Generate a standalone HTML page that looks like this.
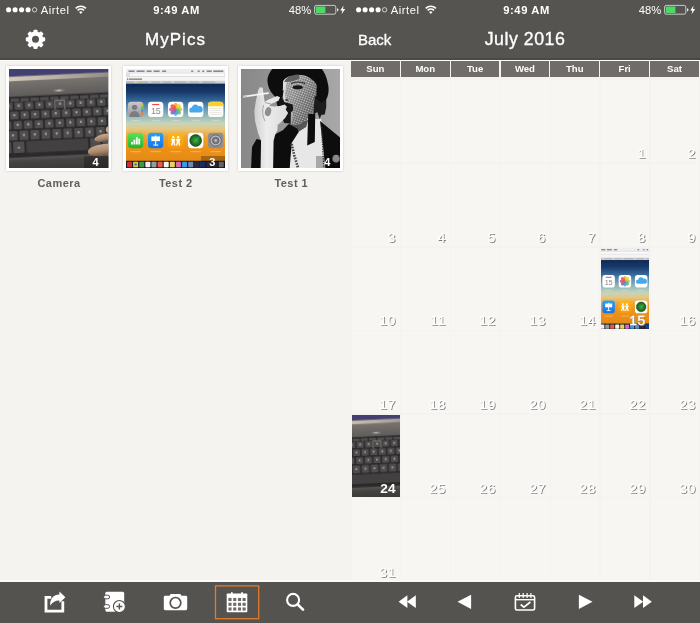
<!DOCTYPE html>
<html><head><meta charset="utf-8">
<style>
html,body{margin:0;padding:0;}
body{width:700px;height:623px;overflow:hidden;background:#f4f3ef;font-family:"Liberation Sans",sans-serif;position:relative;}
.scr{will-change:transform;position:absolute;top:0;width:350px;height:623px;overflow:hidden;background:#f4f3ef;}
#L{left:0;}#R{left:350px;background:#f4f3ef;}
.hdr{position:absolute;left:0;top:0;width:350px;height:59.7px;background:linear-gradient(#565451,#565451 57.4px,#4b4946 58.4px,#4b4946);}
.hl{position:absolute;left:0;top:59.7px;width:350px;height:1.7px;background:#fdfdfc;}
.sb{position:absolute;top:3px;height:14px;line-height:14px;color:#fff;font-size:11.2px;white-space:nowrap;}
.title{position:absolute;top:26.5px;left:0;width:350px;text-align:center;color:#fff;font-size:16.5px;line-height:26px;-webkit-text-stroke:0.35px #fff;}
.tb{position:absolute;left:0;top:582.1px;width:350px;height:41px;background:#55534f;box-shadow:0 -1.6px 0 #fcfcfa;}
.abs{position:absolute;}
.frame{position:absolute;top:66.2px;width:104.8px;height:104.8px;background:#fff;box-shadow:0 .3px 1.8px rgba(60,55,40,.28);}
.ph{position:absolute;left:2.9px;top:2.9px;width:99.3px;height:99.1px;overflow:hidden;}
.lbl{position:absolute;top:176px;width:117px;text-align:center;font-weight:bold;font-size:11px;letter-spacing:.45px;color:#62605d;line-height:14px;}
.badge{position:absolute;right:0;bottom:0;width:22.8px;padding-right:1.6px;height:11.8px;background:rgba(0,0,0,.27);color:#fff;font-weight:bold;font-size:11px;line-height:12.4px;text-align:center;}
.wd{position:absolute;top:61.4px;width:48.8px;height:15.7px;background:#6f6c69;color:#fff;font-weight:bold;font-size:9.6px;line-height:15.2px;text-align:center;}
.cell{position:absolute;width:48.5px;height:82px;background:#f7f6f3;}
.dn{position:absolute;transform:scaleX(1.1);transform-origin:100% 50%;color:#fff;font-size:12.7px;line-height:14px;text-align:right;width:48.6px;letter-spacing:.4px;-webkit-text-stroke:.35px #fff;text-shadow:1px 1px .5px #7a7875;}
</style></head><body>
<svg width="0" height="0" style="position:absolute;left:-10px;top:-10px"><defs>
<symbol id="ph1" viewBox="0 0 99 99" preserveAspectRatio="none">
<defs><linearGradient id="k1a" x1="0" x2="1" y1="0" y2="0"><stop offset="0" stop-color="#d6cbbb"/><stop offset=".5" stop-color="#b9b0a4"/><stop offset="1" stop-color="#8f8a84"/></linearGradient><linearGradient id="k1b" x1="0" x2="0" y1="0" y2="1"><stop offset="0" stop-color="#77736f"/><stop offset="1" stop-color="#5d5a58"/></linearGradient><linearGradient id="k1c" x1="0" x2="0" y1="0" y2="1"><stop offset="0" stop-color="#5a5755"/><stop offset=".22" stop-color="#454341"/><stop offset="1" stop-color="#353332"/></linearGradient><radialGradient id="k1h"><stop offset="0" stop-color="#d8d4cf" stop-opacity=".95"/><stop offset="1" stop-color="#8a8682" stop-opacity="0"/></radialGradient><linearGradient id="k1f" x1="0" x2="0" y1="0" y2="1"><stop offset="0" stop-color="#c9ab90"/><stop offset=".55" stop-color="#ab8a6c"/><stop offset="1" stop-color="#6c5244"/></linearGradient><filter id="bl1" x="-5%" y="-5%" width="110%" height="110%"><feGaussianBlur stdDeviation=".45"/></filter></defs>
<rect width="99" height="99" fill="#2d2c2c"/>
<g transform="rotate(-2.7 49.5 49.5)" filter="url(#bl1)">
<rect x="-5" y="-6" width="110" height="12" fill="#433f70"/>
<rect x="-5" y="5.6" width="110" height="5" fill="url(#k1a)"/>
<rect x="-5" y="10.2" width="110" height="16.3" fill="url(#k1b)"/>
<ellipse cx="51" cy="21.5" rx="7" ry="2" fill="url(#k1h)"/>
<rect x="-5" y="25.6" width="110" height="62" fill="#2c2b2c"/>
<rect x="-5" y="86.6" width="110" height="20" fill="url(#k1c)"/>
<rect x="2.5" y="27.4" width="8.4" height="3.3" rx=".6" fill="#4f4d4e"/>
<rect x="12.4" y="27.4" width="8.4" height="3.3" rx=".6" fill="#4f4d4e"/>
<rect x="22.3" y="27.4" width="8.4" height="3.3" rx=".6" fill="#4f4d4e"/>
<rect x="32.2" y="27.4" width="8.4" height="3.3" rx=".6" fill="#4f4d4e"/>
<rect x="42.1" y="27.4" width="8.4" height="3.3" rx=".6" fill="#4f4d4e"/>
<rect x="52.0" y="27.4" width="8.4" height="3.3" rx=".6" fill="#4f4d4e"/>
<rect x="61.9" y="27.4" width="8.4" height="3.3" rx=".6" fill="#4f4d4e"/>
<rect x="71.8" y="27.4" width="8.4" height="3.3" rx=".6" fill="#4f4d4e"/>
<rect x="81.7" y="27.4" width="8.4" height="3.3" rx=".6" fill="#4f4d4e"/>
<rect x="91.6" y="27.4" width="8.4" height="3.3" rx=".6" fill="#4f4d4e"/>
<rect x="101.5" y="27.4" width="8.4" height="3.3" rx=".6" fill="#4f4d4e"/>
<rect x="-4.0" y="31.4" width="8.2" height="7.3" rx=".9" fill="#4f4d4e"/>
<rect x="-0.8" y="33.6" width="1.7" height="2.2" fill="#c4c2bf" opacity=".8"/>
<rect x="6.3" y="31.4" width="8.2" height="7.3" rx=".9" fill="#4f4d4e"/>
<rect x="9.5" y="33.6" width="1.7" height="2.2" fill="#c4c2bf" opacity=".8"/>
<rect x="16.6" y="31.4" width="8.2" height="7.3" rx=".9" fill="#4f4d4e"/>
<rect x="19.8" y="33.6" width="1.7" height="2.2" fill="#c4c2bf" opacity=".8"/>
<rect x="26.9" y="31.4" width="8.2" height="7.3" rx=".9" fill="#4f4d4e"/>
<rect x="30.1" y="33.6" width="1.7" height="2.2" fill="#c4c2bf" opacity=".8"/>
<rect x="37.2" y="31.4" width="8.2" height="7.3" rx=".9" fill="#4f4d4e"/>
<rect x="40.4" y="33.6" width="1.7" height="2.2" fill="#c4c2bf" opacity=".8"/>
<rect x="47.5" y="31.4" width="8.2" height="7.3" rx=".9" fill="#4f4d4e"/>
<rect x="50.7" y="33.6" width="1.7" height="2.2" fill="#c4c2bf" opacity=".8"/>
<rect x="57.8" y="31.4" width="8.2" height="7.3" rx=".9" fill="#4f4d4e"/>
<rect x="61.0" y="33.6" width="1.7" height="2.2" fill="#c4c2bf" opacity=".8"/>
<rect x="68.1" y="31.4" width="8.2" height="7.3" rx=".9" fill="#4f4d4e"/>
<rect x="71.3" y="33.6" width="1.7" height="2.2" fill="#c4c2bf" opacity=".8"/>
<rect x="78.4" y="31.4" width="8.2" height="7.3" rx=".9" fill="#4f4d4e"/>
<rect x="81.6" y="33.6" width="1.7" height="2.2" fill="#c4c2bf" opacity=".8"/>
<rect x="88.7" y="31.4" width="8.2" height="7.3" rx=".9" fill="#4f4d4e"/>
<rect x="91.9" y="33.6" width="1.7" height="2.2" fill="#c4c2bf" opacity=".8"/>
<rect x="99.0" y="31.4" width="8.2" height="7.3" rx=".9" fill="#4f4d4e"/>
<rect x="102.2" y="33.6" width="1.7" height="2.2" fill="#c4c2bf" opacity=".8"/>
<rect x="-9.0" y="40.5" width="8.3" height="7.8" rx=".9" fill="#4f4d4e"/>
<rect x="-5.8" y="43.0" width="1.7" height="2.2" fill="#c4c2bf" opacity=".8"/>
<rect x="1.3" y="40.5" width="8.3" height="7.8" rx=".9" fill="#4f4d4e"/>
<rect x="4.6" y="43.0" width="1.7" height="2.2" fill="#c4c2bf" opacity=".8"/>
<rect x="11.7" y="40.5" width="8.3" height="7.8" rx=".9" fill="#4f4d4e"/>
<rect x="14.9" y="43.0" width="1.7" height="2.2" fill="#c4c2bf" opacity=".8"/>
<rect x="22.0" y="40.5" width="8.3" height="7.8" rx=".9" fill="#4f4d4e"/>
<rect x="25.3" y="43.0" width="1.7" height="2.2" fill="#c4c2bf" opacity=".8"/>
<rect x="32.4" y="40.5" width="8.3" height="7.8" rx=".9" fill="#4f4d4e"/>
<rect x="35.6" y="43.0" width="1.7" height="2.2" fill="#c4c2bf" opacity=".8"/>
<rect x="42.8" y="40.5" width="8.3" height="7.8" rx=".9" fill="#4f4d4e"/>
<rect x="46.0" y="43.0" width="1.7" height="2.2" fill="#c4c2bf" opacity=".8"/>
<rect x="53.1" y="40.5" width="8.3" height="7.8" rx=".9" fill="#4f4d4e"/>
<rect x="56.4" y="43.0" width="1.7" height="2.2" fill="#c4c2bf" opacity=".8"/>
<rect x="63.5" y="40.5" width="8.3" height="7.8" rx=".9" fill="#4f4d4e"/>
<rect x="66.7" y="43.0" width="1.7" height="2.2" fill="#c4c2bf" opacity=".8"/>
<rect x="73.8" y="40.5" width="8.3" height="7.8" rx=".9" fill="#4f4d4e"/>
<rect x="77.0" y="43.0" width="1.7" height="2.2" fill="#c4c2bf" opacity=".8"/>
<rect x="84.1" y="40.5" width="8.3" height="7.8" rx=".9" fill="#4f4d4e"/>
<rect x="87.4" y="43.0" width="1.7" height="2.2" fill="#c4c2bf" opacity=".8"/>
<rect x="94.5" y="40.5" width="8.3" height="7.8" rx=".9" fill="#4f4d4e"/>
<rect x="97.7" y="43.0" width="1.7" height="2.2" fill="#c4c2bf" opacity=".8"/>
<rect x="-6.2" y="50.1" width="8.4" height="8.0" rx=".9" fill="#4f4d4e"/>
<rect x="-2.9" y="52.7" width="1.7" height="2.2" fill="#c4c2bf" opacity=".8"/>
<rect x="4.3" y="50.1" width="8.4" height="8.0" rx=".9" fill="#4f4d4e"/>
<rect x="7.6" y="52.7" width="1.7" height="2.2" fill="#c4c2bf" opacity=".8"/>
<rect x="14.8" y="50.1" width="8.4" height="8.0" rx=".9" fill="#4f4d4e"/>
<rect x="18.1" y="52.7" width="1.7" height="2.2" fill="#c4c2bf" opacity=".8"/>
<rect x="25.3" y="50.1" width="8.4" height="8.0" rx=".9" fill="#4f4d4e"/>
<rect x="28.6" y="52.7" width="1.7" height="2.2" fill="#c4c2bf" opacity=".8"/>
<rect x="35.8" y="50.1" width="8.4" height="8.0" rx=".9" fill="#4f4d4e"/>
<rect x="39.1" y="52.7" width="1.7" height="2.2" fill="#c4c2bf" opacity=".8"/>
<rect x="46.3" y="50.1" width="8.4" height="8.0" rx=".9" fill="#4f4d4e"/>
<rect x="49.6" y="52.7" width="1.7" height="2.2" fill="#c4c2bf" opacity=".8"/>
<rect x="56.8" y="50.1" width="8.4" height="8.0" rx=".9" fill="#4f4d4e"/>
<rect x="60.1" y="52.7" width="1.7" height="2.2" fill="#c4c2bf" opacity=".8"/>
<rect x="67.3" y="50.1" width="8.4" height="8.0" rx=".9" fill="#4f4d4e"/>
<rect x="70.6" y="52.7" width="1.7" height="2.2" fill="#c4c2bf" opacity=".8"/>
<rect x="77.8" y="50.1" width="8.4" height="8.0" rx=".9" fill="#4f4d4e"/>
<rect x="81.1" y="52.7" width="1.7" height="2.2" fill="#c4c2bf" opacity=".8"/>
<rect x="88.3" y="50.1" width="8.4" height="8.0" rx=".9" fill="#4f4d4e"/>
<rect x="91.6" y="52.7" width="1.7" height="2.2" fill="#c4c2bf" opacity=".8"/>
<rect x="98.8" y="50.1" width="8.4" height="8.0" rx=".9" fill="#4f4d4e"/>
<rect x="102.1" y="52.7" width="1.7" height="2.2" fill="#c4c2bf" opacity=".8"/>
<rect x="-1.0" y="59.9" width="8.7" height="9.3" rx=".9" fill="#4f4d4e"/>
<rect x="2.4" y="63.1" width="1.7" height="2.2" fill="#c4c2bf" opacity=".8"/>
<rect x="9.9" y="59.9" width="8.7" height="9.3" rx=".9" fill="#4f4d4e"/>
<rect x="13.3" y="63.1" width="1.7" height="2.2" fill="#c4c2bf" opacity=".8"/>
<rect x="20.8" y="59.9" width="8.7" height="9.3" rx=".9" fill="#4f4d4e"/>
<rect x="24.2" y="63.1" width="1.7" height="2.2" fill="#c4c2bf" opacity=".8"/>
<rect x="31.7" y="59.9" width="8.7" height="9.3" rx=".9" fill="#4f4d4e"/>
<rect x="35.2" y="63.1" width="1.7" height="2.2" fill="#c4c2bf" opacity=".8"/>
<rect x="42.6" y="59.9" width="8.7" height="9.3" rx=".9" fill="#4f4d4e"/>
<rect x="46.1" y="63.1" width="1.7" height="2.2" fill="#c4c2bf" opacity=".8"/>
<rect x="53.5" y="59.9" width="8.7" height="9.3" rx=".9" fill="#4f4d4e"/>
<rect x="57.0" y="63.1" width="1.7" height="2.2" fill="#c4c2bf" opacity=".8"/>
<rect x="64.4" y="59.9" width="8.7" height="9.3" rx=".9" fill="#4f4d4e"/>
<rect x="67.8" y="63.1" width="1.7" height="2.2" fill="#c4c2bf" opacity=".8"/>
<rect x="75.3" y="59.9" width="8.7" height="9.3" rx=".9" fill="#4f4d4e"/>
<rect x="78.8" y="63.1" width="1.7" height="2.2" fill="#c4c2bf" opacity=".8"/>
<rect x="86.2" y="59.9" width="8.7" height="9.3" rx=".9" fill="#4f4d4e"/>
<rect x="89.7" y="63.1" width="1.7" height="2.2" fill="#c4c2bf" opacity=".8"/>
<rect x="97.1" y="59.9" width="8.7" height="9.3" rx=".9" fill="#4f4d4e"/>
<rect x="100.6" y="63.1" width="1.7" height="2.2" fill="#c4c2bf" opacity=".8"/>
<rect x="-4" y="70.8" width="5" height="11" rx=".9" fill="#4f4d4e"/>
<rect x="3" y="70.8" width="11" height="11" rx=".9" fill="#4f4d4e"/>
<rect x="7.6" y="75.8" width="1.9" height="1.7" fill="#c4c2bf" opacity=".8"/>
<rect x="16.2" y="70.8" width="61.5" height="11.3" rx=".9" fill="#424040"/>
<rect x="80" y="70.8" width="10" height="11" rx=".9" fill="#4f4d4e"/>
<rect x="92" y="70.8" width="10" height="11" rx=".9" fill="#4f4d4e"/>
<path d="M46.6 40.3 V31.2 H56.2 V40.3" fill="none" stroke="#cfcac2" stroke-width=".7" opacity=".8"/>
</g>
<g filter="url(#bl1)">
<ellipse cx="100.5" cy="60.6" rx="4" ry="3.3" fill="#c6a88c"/>
<ellipse cx="96.5" cy="68.6" rx="11.5" ry="4" fill="url(#k1f)" transform="rotate(-10 96.5 68.6)"/>
<ellipse cx="93.5" cy="81" rx="15" ry="6" fill="url(#k1f)" transform="rotate(-8 93.5 81)"/>
</g>
</symbol>
<symbol id="ph2" viewBox="0 0 99 99" preserveAspectRatio="none">
<defs><linearGradient id="w2" x1="0" x2="0" y1="0" y2="1"><stop offset="0" stop-color="#0d2850"/><stop offset=".1" stop-color="#17396a"/><stop offset=".2" stop-color="#336496"/><stop offset=".3" stop-color="#6798b6"/><stop offset=".4" stop-color="#9fc0ba"/><stop offset=".47" stop-color="#c6d4bc"/><stop offset=".54" stop-color="#e6c67c"/><stop offset=".62" stop-color="#efa234"/><stop offset=".72" stop-color="#ee9419"/><stop offset="1" stop-color="#e28410"/></linearGradient><filter id="bl2" x="-5%" y="-5%" width="110%" height="110%"><feGaussianBlur stdDeviation=".3"/></filter><linearGradient id="g2n" x1="0" x2="0" y1="0" y2="1"><stop offset="0" stop-color="#5fe05a"/><stop offset="1" stop-color="#22b52e"/></linearGradient><linearGradient id="g2k" x1="0" x2="0" y1="0" y2="1"><stop offset="0" stop-color="#27a2f6"/><stop offset="1" stop-color="#1573ea"/></linearGradient><linearGradient id="g2f" x1="0" x2="0" y1="0" y2="1"><stop offset="0" stop-color="#fbb81e"/><stop offset="1" stop-color="#f7990d"/></linearGradient><linearGradient id="g2c" x1="0" x2="0" y1="0" y2="1"><stop offset="0" stop-color="#c9c9cc"/><stop offset="1" stop-color="#9a9a9e"/></linearGradient><radialGradient id="g2r"><stop offset="0" stop-color="#3fae3f"/><stop offset="1" stop-color="#125a1c"/></radialGradient></defs>
<g filter="url(#bl2)">
<rect x="-1" y="14" width="101" height="86" fill="url(#w2)"/>
<rect x="-1" y="-1" width="101" height="4.5" fill="#eeeef1"/>
<rect x="-1" y="3.4" width="101" height="4.7" fill="#dfdfe1"/>
<rect x="4" y="4.5" width="94" height="2.6" rx=".5" fill="#fafafa"/>
<rect x="-1" y="8" width="101" height="4" fill="#f4f4f4"/>
<rect x="-1" y="11.8" width="101" height="2.8" fill="#cfcfd1"/>
<rect x="2.5" y="1.6" width="6" height="1.1" fill="#3a3a44" opacity=".8"/>
<rect x="10.5" y="1.6" width="8" height="1.1" fill="#3a3a44" opacity=".8"/>
<rect x="20.5" y="1.6" width="5" height="1.1" fill="#3a3a44" opacity=".8"/>
<rect x="27.5" y="1.6" width="6" height="1.1" fill="#3a3a44" opacity=".8"/>
<rect x="36" y="1.6" width="4" height="1.1" fill="#3a3a44" opacity=".8"/>
<rect x="65" y="1.6" width="2" height="1.1" fill="#3a3a44" opacity=".8"/>
<rect x="71.5" y="1.6" width="2" height="1.1" fill="#3a3a44" opacity=".8"/>
<rect x="76" y="1.6" width="2" height="1.1" fill="#3a3a44" opacity=".8"/>
<rect x="80.5" y="1.6" width="5" height="1.1" fill="#3a3a44" opacity=".8"/>
<rect x="87" y="1.6" width="10" height="1.1" fill="#3a3a44" opacity=".8"/>
<rect x="3" y="9.6" width="13" height="1" fill="#333" opacity=".8"/>
<rect x="1" y="9.3" width="1.3" height="1.5" fill="#4a9a3a"/>
<rect x="0" y="12.7" width="8" height=".9" fill="#3a3a3e" opacity=".28"/>
<rect x="13" y="12.7" width="9" height=".9" fill="#3a3a3e" opacity=".28"/>
<rect x="25" y="12.7" width="9" height=".9" fill="#3a3a3e" opacity=".28"/>
<rect x="37" y="12.7" width="8" height=".9" fill="#3a3a3e" opacity=".28"/>
<rect x="48" y="12.7" width="12" height=".9" fill="#3a3a3e" opacity=".28"/>
<rect x="63" y="12.7" width="10" height=".9" fill="#3a3a3e" opacity=".28"/>
<rect x="76" y="12.7" width="13" height=".9" fill="#3a3a3e" opacity=".28"/>
<rect x="11" y="12.4" width="1.6" height="1.6" fill="#e8c020"/>
<rect x="1.9" y="32.7" width="15.3" height="15.3" rx="3.4" fill="url(#g2c)"/>
<circle cx="8.5" cy="38.300000000000004" r="2.7" fill="#7c7c80"/><path d="M3.5 48.0 q0 -5.4 5 -6 q5 .6 5 6z" fill="#7c7c80"/>
<rect x="14.9" y="34.2" width="2.3" height="3" fill="#e8b83a"/><rect x="14.9" y="37.2" width="2.3" height="3" fill="#7ac043"/><rect x="14.9" y="40.2" width="2.3" height="3" fill="#3aa0e8"/><rect x="14.9" y="43.2" width="2.3" height="3" fill="#f08030"/>
<rect x="21.9" y="32.7" width="15.3" height="15.3" rx="3.4" fill="#fff"/>
<rect x="26.099999999999998" y="34.900000000000006" width="7" height="1.2" fill="#f0483e"/>
<text x="29.549999999999997" y="45.300000000000004" font-family="Liberation Sans,sans-serif" font-size="9" text-anchor="middle" fill="#8a8a8a" letter-spacing="-.3">15</text>
<rect x="41.9" y="32.7" width="15.3" height="15.3" rx="3.4" fill="#fff"/>
<ellipse cx="49.55" cy="37.15" rx="2.1" ry="3.3" fill="#f4a92a" opacity=".9" transform="rotate(0 49.55 40.35)"/>
<ellipse cx="49.55" cy="37.15" rx="2.1" ry="3.3" fill="#f2d13a" opacity=".9" transform="rotate(45 49.55 40.35)"/>
<ellipse cx="49.55" cy="37.15" rx="2.1" ry="3.3" fill="#b7d04a" opacity=".9" transform="rotate(90 49.55 40.35)"/>
<ellipse cx="49.55" cy="37.15" rx="2.1" ry="3.3" fill="#5bbf6a" opacity=".9" transform="rotate(135 49.55 40.35)"/>
<ellipse cx="49.55" cy="37.15" rx="2.1" ry="3.3" fill="#4aa6dc" opacity=".9" transform="rotate(180 49.55 40.35)"/>
<ellipse cx="49.55" cy="37.15" rx="2.1" ry="3.3" fill="#7a6cc8" opacity=".9" transform="rotate(225 49.55 40.35)"/>
<ellipse cx="49.55" cy="37.15" rx="2.1" ry="3.3" fill="#c85aa8" opacity=".9" transform="rotate(270 49.55 40.35)"/>
<ellipse cx="49.55" cy="37.15" rx="2.1" ry="3.3" fill="#f0584a" opacity=".9" transform="rotate(315 49.55 40.35)"/>
<rect x="61.8" y="32.7" width="15.3" height="15.3" rx="3.4" fill="#fff"/>
<path d="M65.39999999999999 43.5 a2.5 2.5 0 0 1 .3 -5 a3.6 3.6 0 0 1 6.6 -1.3 a3.2 3.2 0 0 1 1.9 6.3z" fill="#46a8ee"/>
<rect x="81.8" y="32.7" width="15.3" height="15.3" rx="3.4" fill="#fdfdf8"/>
<path d="M81.8 37.300000000000004 V36.1 a3.4 3.4 0 0 1 3.4 -3.4 H93.69999999999999 a3.4 3.4 0 0 1 3.4 3.4 V37.300000000000004z" fill="#fbd02c"/>
<rect x="83.3" y="39.300000000000004" width="12.3" height=".35" fill="#c9c9c0"/>
<rect x="83.3" y="41.400000000000006" width="12.3" height=".35" fill="#c9c9c0"/>
<rect x="83.3" y="43.50000000000001" width="12.3" height=".35" fill="#c9c9c0"/>
<rect x="83.3" y="45.60000000000001" width="12.3" height=".35" fill="#c9c9c0"/>
<rect x="1.9" y="63.8" width="15.3" height="15.3" rx="3.4" fill="url(#g2n)"/>
<rect x="5.1" y="72.8" width="1.8" height="2.6" fill="#fff"/>
<rect x="7.5" y="70.6" width="1.8" height="4.8" fill="#fff"/>
<rect x="9.899999999999999" y="67.99999999999999" width="1.8" height="7.4" fill="#fff"/>
<rect x="12.299999999999999" y="69.6" width="1.8" height="5.8" fill="#fff"/>
<rect x="21.9" y="63.8" width="15.3" height="15.3" rx="3.4" fill="url(#g2k)"/>
<rect x="25.299999999999997" y="67.39999999999999" width="8.6" height="4.6" fill="#fff"/><rect x="29.0" y="66.39999999999999" width="1.1" height="9.6" fill="#fff"/><rect x="27.099999999999998" y="75.5" width="5" height="1" fill="#fff"/>
<rect x="41.9" y="63.8" width="15.3" height="15.3" rx="3.4" fill="url(#g2f)"/>
<circle cx="47.1" cy="68.1" r="1.15" fill="#fff"/><path d="M44.9 69.8 h4.4 l-.9 3 l.9 3.6 h-1.4 l-.8 -3 l-.8 3 h-1.4 l.9 -3.6z" fill="#fff"/>
<circle cx="52.0" cy="68.1" r="1.15" fill="#fff"/><path d="M49.8 69.8 h4.4 l-.9 3 l.9 3.6 h-1.4 l-.8 -3 l-.8 3 h-1.4 l.9 -3.6z" fill="#fff"/>
<rect x="61.8" y="63.8" width="15.3" height="15.3" rx="3.4" fill="#fff"/>
<circle cx="69.45" cy="71.45" r="5.9" fill="url(#g2r)" stroke="#0e3a14" stroke-width=".6"/>
<path d="M69.45 71.45 L73.65 67.25" stroke="#9be08a" stroke-width=".5" opacity=".8"/>
<rect x="81.8" y="63.8" width="15.3" height="15.3" rx="3.4" fill="#8e8e93"/>
<circle cx="89.45" cy="71.45" r="5.6" fill="#b9b9be" stroke="#55555a" stroke-width=".8"/><circle cx="89.45" cy="71.45" r="3.3" fill="#7a7a80" stroke="#4a4a50" stroke-width=".6"/><circle cx="89.45" cy="71.45" r="1.2" fill="#c8c8cc"/>
<rect x="5.4" y="51.2" width="8.4" height=".9" fill="#fff" opacity=".33"/>
<rect x="4.4" y="82.2" width="10.4" height=".9" fill="#fff" opacity=".38"/>
<rect x="25.4" y="51.2" width="8.4" height=".9" fill="#fff" opacity=".33"/>
<rect x="24.4" y="82.2" width="10.4" height=".9" fill="#fff" opacity=".38"/>
<rect x="45.4" y="51.2" width="8.4" height=".9" fill="#fff" opacity=".33"/>
<rect x="44.4" y="82.2" width="10.4" height=".9" fill="#fff" opacity=".38"/>
<rect x="65.3" y="51.2" width="8.4" height=".9" fill="#fff" opacity=".33"/>
<rect x="64.3" y="82.2" width="10.4" height=".9" fill="#fff" opacity=".38"/>
<rect x="85.3" y="51.2" width="8.4" height=".9" fill="#fff" opacity=".33"/>
<rect x="84.3" y="82.2" width="10.4" height=".9" fill="#fff" opacity=".38"/>
<rect x="-1" y="91.7" width="101" height="8" fill="#1b1d2a"/>
<rect x="1.0" y="92.7" width="5" height="5.4" rx=".8" fill="#d82a2a"/>
<rect x="7.1" y="92.7" width="5" height="5.4" rx=".8" fill="#e8c43a"/>
<rect x="13.2" y="92.7" width="5" height="5.4" rx=".8" fill="#3f9a3a"/>
<rect x="19.3" y="92.7" width="5" height="5.4" rx=".8" fill="#f0f0f0"/>
<rect x="25.4" y="92.7" width="5" height="5.4" rx=".8" fill="#9a9a9a"/>
<rect x="31.5" y="92.7" width="5" height="5.4" rx=".8" fill="#e85a4a"/>
<rect x="37.6" y="92.7" width="5" height="5.4" rx=".8" fill="#f4f4ec"/>
<rect x="43.7" y="92.7" width="5" height="5.4" rx=".8" fill="#e8d25a"/>
<rect x="49.8" y="92.7" width="5" height="5.4" rx=".8" fill="#d86ab0"/>
<rect x="55.9" y="92.7" width="5" height="5.4" rx=".8" fill="#3a9ae8"/>
<rect x="62.0" y="92.7" width="5" height="5.4" rx=".8" fill="#6a8ab8"/>
<rect x="68.1" y="92.7" width="5" height="5.4" rx=".8" fill="#2a2c3a"/>
<rect x="74.2" y="92.7" width="5" height="5.4" rx=".8" fill="#1f3f8a"/>
<rect x="80.3" y="92.7" width="5" height="5.4" rx=".8" fill="#3a3a4a"/>
<rect x="86.4" y="92.7" width="5" height="5.4" rx=".8" fill="#30303a"/>
<rect x="92.5" y="92.7" width="5" height="5.4" rx=".8" fill="#8a8a8a"/>
<circle cx="9.6" cy="95.4" r="1.3" fill="#3a78d8"/>
</g>
</symbol>
<symbol id="ph3" viewBox="0 0 99 99" preserveAspectRatio="none">
<defs><linearGradient id="b3" x1="0" x2="1" y1="0" y2="0"><stop offset="0" stop-color="#888"/><stop offset="1" stop-color="#a8a8a8"/></linearGradient><linearGradient id="f3" x1="0" x2="1" y1="0" y2=".8"><stop offset="0" stop-color="#ededed"/><stop offset=".4" stop-color="#c8c8c8"/><stop offset="1" stop-color="#6a6a6a"/></linearGradient><linearGradient id="h3" x1="0" x2="1" y1="0" y2="0"><stop offset="0" stop-color="#cfcfcf"/><stop offset=".35" stop-color="#ececec"/><stop offset="1" stop-color="#dcdcdc"/></linearGradient><pattern id="n3" width="2.3" height="2.3" patternUnits="userSpaceOnUse" patternTransform="rotate(20)"><rect width="2.3" height="2.3" fill="#141414" opacity=".7"/><circle cx="1.15" cy="1.15" r=".8" fill="#e4e4e4"/></pattern><filter id="bl3" x="-5%" y="-5%" width="110%" height="110%"><feGaussianBlur stdDeviation=".4"/></filter></defs>
<rect width="99" height="99" fill="url(#b3)"/>
<g filter="url(#bl3)">
<path d="M55 50 L80 50 L80.5 56 L84.5 100 L48 100 L50 74 L57 62 Z" fill="#e7e7e7"/>
<path d="M48 54 L67 51 L65 58 L57 63 L49 61 Z" fill="#555"/><path d="M43.5 41 L50 41.5 L51 49 L48.5 54 L45.5 49 Z" fill="#1d1d1d"/>
<path d="M42 9 L41.6 20 L40.8 27.5 L43 31 L43 35 L44.5 42 L46.5 50 L50.5 55.8 L58 55.4 L66 50.5 L72 43 L76 31 L76 12 L60 4 Z" fill="url(#f3)"/>
<path d="M46 10 L44 24 L45 33 L52 44 L50.5 55.8 L58 55.4 L66 50.5 L72 43 L76 31 L76 12 L60 6 Z" fill="url(#n3)" opacity=".6"/>
<ellipse cx="56.5" cy="18.2" rx="5" ry="2" fill="#141414"/>
<path d="M50 14.5 Q57 11.5 64 14.5" stroke="#222" stroke-width="1.2" fill="none"/>
<ellipse cx="46.8" cy="38.8" rx="4.3" ry="2.9" fill="#161616"/>
<ellipse cx="45.5" cy="31" rx="1.6" ry="1" fill="#444"/>
<path d="M34 27 L42.5 21 L41.4 29.2 L43.2 33 L51.5 35.5 L52 41 L49.8 43.5 L49.5 54.5 L43 54 L40 46 L36 36 Z" fill="#141414"/>
<path d="M43 13 C45 8 50 5 58 5.5 L58 10 L50 12.5 Z" fill="#5e5e5e"/>
<path d="M73.5 27 L85 30 L85 38 L83.5 45.5 L80 46 L78.5 50 L76 43 L72 46 Z" fill="#1e1e1e"/>
<path d="M32 -1 C28 4 26 8 26.5 13 C27 19 30 24 34 27.5 L39 30 L41.5 25 L42 12 C45 8 50 5.8 57 5.8 C66 6 72 10 75.5 16 L75 30 L80 33.5 L84.5 31 C87.5 27 88 20 86.5 14 C85.5 8 83 3 80 -1 Z" fill="#0c0c0c"/>
<path d="M15.5 70 L11 78 L10 100 L20 100 L20 71 Z" fill="#0d0d0d"/>
<path d="M31 67 L42 61 L47.5 55 L56 59.5 L57.5 63 L50.5 74 L48.5 100 L31 100 Z" fill="#0d0d0d"/>
<path d="M78.8 52 L100 69.5 L100 100 L84.3 100 L80.2 64 Z" fill="#0d0d0d"/>
<path d="M67 45 L74 45 L73.6 73 L66 76.5 Z" fill="#111"/>
<path d="M80.3 58 L82.6 99" stroke="#3a3a3a" stroke-width="1.3" stroke-dasharray="1.3 1.1" fill="none"/>
<path d="M50.5 75 L53 86 L57 99" stroke="#444" stroke-width="2.6" stroke-dasharray="1.6 1.2" fill="none"/>
<circle cx="94.8" cy="89.6" r="3.7" fill="#bdbdbd" stroke="#6a6a6a" stroke-width=".7"/>
<path d="M17.2 21 L18.6 18.2 L21.6 18.8 L23.6 33 L27 30.6 L36 27 L39 28.2 L37.4 31.6 L30.5 34.6 L28 37 L33 37.4 L38.5 37 L43.5 35.4 L45.8 37.6 L44.6 40.5 L47 44 L44 49 L40 53 L36.5 56 L36.4 61 L34 66 L32.5 72 L32 100 L19.5 100 L20 72 L17 64 L14 52 L13.3 42 L14.8 32 Z" fill="url(#h3)"/>
<ellipse cx="27" cy="42.6" rx="3" ry="4.6" fill="#8f8f8f" transform="rotate(15 27 42.6)"/>

<path d="M24 33.6 L30 35 M22.5 36 Q20 45 24 52" stroke="#8a8a8a" stroke-width=".7" fill="none"/>
<path d="M2.8 27.6 L27 24.1" stroke="#f4f4f4" stroke-width="1.8" stroke-linecap="round"/>
<path d="M2.8 27.6 L5 27.3" stroke="#c4c4c4" stroke-width="1.8" stroke-linecap="round"/>
</g>
</symbol>
</defs></svg>
<div class="scr" id="L">
<div class="hdr"></div><div class="hl"></div>
<svg class="abs" style="left:0;top:0" width="350" height="20" viewBox="0 0 350 20">
<g fill="#fff"><circle cx="8.6" cy="9.8" r="2.55"/><circle cx="15.1" cy="9.8" r="2.55"/><circle cx="21.6" cy="9.8" r="2.55"/><circle cx="28.1" cy="9.8" r="2.55"/></g>
<circle cx="34.6" cy="9.8" r="2.2" fill="none" stroke="#fff" stroke-width="0.7"/>
<g fill="none" stroke="#fff" stroke-width="1.6"><path d="M75.7 8.3 A7.4 7.4 0 0 1 85.9 8.3"/><path d="M77.6 10.4 A4.7 4.7 0 0 1 84 10.4"/></g><path d="M79.1 12 A2.4 2.4 0 0 1 82.5 12 L80.8 14 Z" fill="#fff"/>
<rect x="314.6" y="5.4" width="21.2" height="8.8" rx="1.6" fill="none" stroke="#fff" stroke-width="0.8" opacity=".85"/>
<rect x="315.8" y="6.6" width="9.6" height="6.4" rx=".6" fill="#4cd964"/>
<path d="M337 8.2 q1.5 0 1.5 1.6 q0 1.6 -1.5 1.6z" fill="#fff" opacity=".85"/>
<path d="M343.6 5.4 L340.3 10.4 L342.4 10.4 L341.6 14.3 L345.2 9 L343 9 Z" fill="#fff"/>
</svg>
<div class="sb" style="left:40.7px;letter-spacing:.55px">Airtel</div>
<div class="sb" style="left:0;width:350px;text-align:center;font-weight:bold;letter-spacing:.6px;text-indent:3px">9:49 AM</div>
<div class="sb" style="left:288.7px;">48%</div>
<svg class="abs" style="left:0;top:20px" width="70" height="40" viewBox="0 20 70 40"><g fill="#fff"><circle cx="35.5" cy="39.35" r="7.8"/><rect x="33.40" y="29.65" width="4.2" height="5" rx="1.1" transform="rotate(0 35.5 39.35)"/><rect x="33.40" y="29.65" width="4.2" height="5" rx="1.1" transform="rotate(45 35.5 39.35)"/><rect x="33.40" y="29.65" width="4.2" height="5" rx="1.1" transform="rotate(90 35.5 39.35)"/><rect x="33.40" y="29.65" width="4.2" height="5" rx="1.1" transform="rotate(135 35.5 39.35)"/><rect x="33.40" y="29.65" width="4.2" height="5" rx="1.1" transform="rotate(180 35.5 39.35)"/><rect x="33.40" y="29.65" width="4.2" height="5" rx="1.1" transform="rotate(225 35.5 39.35)"/><rect x="33.40" y="29.65" width="4.2" height="5" rx="1.1" transform="rotate(270 35.5 39.35)"/><rect x="33.40" y="29.65" width="4.2" height="5" rx="1.1" transform="rotate(315 35.5 39.35)"/></g><circle cx="35.5" cy="39.35" r="3.5" fill="#55534f"/></svg>
<div class="title" style="font-size:17px;letter-spacing:1px;text-indent:1px">MyPics</div>
<div class="frame" style="left:6.4px"><div class="ph" id="p1"><svg width="99.3" height="99.1" viewBox="0 0 99 99" preserveAspectRatio="none" style="display:block"><use href="#ph1" width="99" height="99"/></svg><div class="badge">4</div></div></div>
<div class="frame" style="left:123px"><div class="ph" id="p2"><svg width="99.3" height="99.1" viewBox="0 0 99 99" preserveAspectRatio="none" style="display:block"><use href="#ph2" width="99" height="99"/></svg><div class="badge">3</div></div></div>
<div class="frame" style="left:238.2px"><div class="ph" id="p3"><svg width="99.3" height="99.1" viewBox="0 0 99 99" preserveAspectRatio="none" style="display:block"><use href="#ph3" width="99" height="99"/></svg><div class="badge">4</div></div></div>
<div class="lbl" style="left:0.5px">Camera</div>
<div class="lbl" style="left:117.3px">Test 2</div>
<div class="lbl" style="left:232.8px">Test 1</div>
<div class="tb"><svg class="abs" style="left:0;top:0" width="350" height="41" viewBox="0 582 350 41">
<rect x="215.5" y="585.9" width="43.2" height="32.8" fill="none" stroke="#e07b2f" stroke-width="1.3"/>
<!-- share -->
<path d="M51.3 597.4 H46 V611.2 H62.8 V601.3" fill="none" stroke="#fff" stroke-width="2.8"/>
<path d="M59.4 591.6 L65.4 597.3 L59.4 603 L59.4 600.5 C55.8 600.3 53 601.8 50.2 605.6 C49.7 598.6 53.6 594.6 59.4 594.4 Z" fill="#fff"/>
<!-- album -->
<rect x="105.3" y="591.7" width="18.9" height="20" rx="1.6" fill="#fff"/>
<rect x="103.6" y="595.2" width="6" height="3.6" rx="1.8" fill="#fff" stroke="#55534f" stroke-width="1"/>
<rect x="103.6" y="604.7" width="6" height="3.6" rx="1.8" fill="#fff" stroke="#55534f" stroke-width="1"/>
<circle cx="119.4" cy="606.5" r="6" fill="#fff" stroke="#55534f" stroke-width="1.1"/>
<path d="M116.4 606.5 H122.4 M119.4 603.5 V609.5" stroke="#55534f" stroke-width="1.4" fill="none"/>
<!-- camera -->
<path d="M165.2 595.7 H169.6 L170.6 594 H180.4 L181.4 595.7 H185.8 Q187.2 595.7 187.2 597.1 V608.8 Q187.2 610.2 185.8 610.2 H165.2 Q163.8 610.2 163.8 608.8 V597.1 Q163.8 595.7 165.2 595.7 Z" fill="#fff"/>
<circle cx="175.5" cy="602.8" r="5.3" fill="#fff" stroke="#55534f" stroke-width="1.7"/>
<!-- calendar -->
<rect x="226.7" y="593.5" width="20.6" height="18.7" rx=".8" fill="#fff"/>
<rect x="231" y="592.2" width="1.7" height="2" fill="#fff"/><rect x="241.2" y="592.2" width="1.7" height="2" fill="#fff"/>
<g fill="#6d6b68"><rect x="228.45" y="597.95" width="3.1" height="3.1"/><rect x="228.45" y="602.75" width="3.1" height="3.1"/><rect x="228.45" y="607.45" width="3.1" height="3.1"/><rect x="233.20" y="597.95" width="3.1" height="3.1"/><rect x="233.20" y="602.75" width="3.1" height="3.1"/><rect x="233.20" y="607.45" width="3.1" height="3.1"/><rect x="237.95" y="597.95" width="3.1" height="3.1"/><rect x="237.95" y="602.75" width="3.1" height="3.1"/><rect x="237.95" y="607.45" width="3.1" height="3.1"/><rect x="242.55" y="597.95" width="3.1" height="3.1"/><rect x="242.55" y="602.75" width="3.1" height="3.1"/><rect x="242.55" y="607.45" width="3.1" height="3.1"/></g>
<!-- search -->
<circle cx="293.1" cy="599.9" r="6" fill="none" stroke="#fff" stroke-width="2.1"/>
<path d="M297.6 604.4 L303 609.6" stroke="#fff" stroke-width="2.7" stroke-linecap="round"/>
</svg></div>
</div>
<div class="scr" id="R">
<div class="hdr"></div><div class="hl"></div>
<svg class="abs" style="left:0;top:0" width="350" height="20" viewBox="0 0 350 20">
<g fill="#fff"><circle cx="8.6" cy="9.8" r="2.55"/><circle cx="15.1" cy="9.8" r="2.55"/><circle cx="21.6" cy="9.8" r="2.55"/><circle cx="28.1" cy="9.8" r="2.55"/></g>
<circle cx="34.6" cy="9.8" r="2.2" fill="none" stroke="#fff" stroke-width="0.7"/>
<g fill="none" stroke="#fff" stroke-width="1.6"><path d="M75.7 8.3 A7.4 7.4 0 0 1 85.9 8.3"/><path d="M77.6 10.4 A4.7 4.7 0 0 1 84 10.4"/></g><path d="M79.1 12 A2.4 2.4 0 0 1 82.5 12 L80.8 14 Z" fill="#fff"/>
<rect x="314.6" y="5.4" width="21.2" height="8.8" rx="1.6" fill="none" stroke="#fff" stroke-width="0.8" opacity=".85"/>
<rect x="315.8" y="6.6" width="9.6" height="6.4" rx=".6" fill="#4cd964"/>
<path d="M337 8.2 q1.5 0 1.5 1.6 q0 1.6 -1.5 1.6z" fill="#fff" opacity=".85"/>
<path d="M343.6 5.4 L340.3 10.4 L342.4 10.4 L341.6 14.3 L345.2 9 L343 9 Z" fill="#fff"/>
</svg>
<div class="sb" style="left:40.7px;letter-spacing:.55px">Airtel</div>
<div class="sb" style="left:0;width:350px;text-align:center;font-weight:bold;letter-spacing:.6px;text-indent:3px">9:49 AM</div>
<div class="sb" style="left:288.7px;">48%</div>
<div class="title" style="font-size:17.8px;letter-spacing:.5px;top:25.8px">July 2016</div>
<div class="wd" style="left:1.00px">Sun</div><div class="wd" style="left:50.85px">Mon</div><div class="wd" style="left:100.70px">Tue</div><div class="wd" style="left:150.55px">Wed</div><div class="wd" style="left:200.40px">Thu</div><div class="wd" style="left:250.25px">Fri</div><div class="wd" style="left:300.10px">Sat</div>
<div class="cell" style="left:1.50px;top:80.4px"></div><div class="cell" style="left:51.35px;top:80.4px"></div><div class="cell" style="left:101.20px;top:80.4px"></div><div class="cell" style="left:151.05px;top:80.4px"></div><div class="cell" style="left:200.90px;top:80.4px"></div><div class="cell" style="left:250.75px;top:80.4px"></div><div class="cell" style="left:300.60px;top:80.4px"></div><div class="cell" style="left:1.50px;top:164.0px"></div><div class="cell" style="left:51.35px;top:164.0px"></div><div class="cell" style="left:101.20px;top:164.0px"></div><div class="cell" style="left:151.05px;top:164.0px"></div><div class="cell" style="left:200.90px;top:164.0px"></div><div class="cell" style="left:250.75px;top:164.0px"></div><div class="cell" style="left:300.60px;top:164.0px"></div><div class="cell" style="left:1.50px;top:247.6px"></div><div class="cell" style="left:51.35px;top:247.6px"></div><div class="cell" style="left:101.20px;top:247.6px"></div><div class="cell" style="left:151.05px;top:247.6px"></div><div class="cell" style="left:200.90px;top:247.6px"></div><div class="cell" style="left:250.75px;top:247.6px"></div><div class="cell" style="left:300.60px;top:247.6px"></div><div class="cell" style="left:1.50px;top:331.2px"></div><div class="cell" style="left:51.35px;top:331.2px"></div><div class="cell" style="left:101.20px;top:331.2px"></div><div class="cell" style="left:151.05px;top:331.2px"></div><div class="cell" style="left:200.90px;top:331.2px"></div><div class="cell" style="left:250.75px;top:331.2px"></div><div class="cell" style="left:300.60px;top:331.2px"></div><div class="cell" style="left:1.50px;top:414.8px"></div><div class="cell" style="left:51.35px;top:414.8px"></div><div class="cell" style="left:101.20px;top:414.8px"></div><div class="cell" style="left:151.05px;top:414.8px"></div><div class="cell" style="left:200.90px;top:414.8px"></div><div class="cell" style="left:250.75px;top:414.8px"></div><div class="cell" style="left:300.60px;top:414.8px"></div><div class="cell" style="left:1.50px;top:498.4px"></div><div class="cell" style="left:51.35px;top:498.4px"></div><div class="cell" style="left:101.20px;top:498.4px"></div><div class="cell" style="left:151.05px;top:498.4px"></div><div class="cell" style="left:200.90px;top:498.4px"></div><div class="cell" style="left:250.75px;top:498.4px"></div><div class="cell" style="left:300.60px;top:498.4px"></div>
<svg class="abs" style="left:251px;top:247.6px" width="47.8" height="81.6" viewBox="20.2 0 58.6 99" preserveAspectRatio="none"><use href="#ph2" x="0" y="0" width="99" height="99"/></svg>
<svg class="abs" style="left:1.6px;top:414.8px" width="48.1" height="82" viewBox="20.5 0 58 99" preserveAspectRatio="none"><use href="#ph1" x="0" y="0" width="99" height="99"/></svg>
<div class="dn" style="left:246.65px;top:147.2px">1</div><div class="dn" style="left:296.52px;top:147.2px">2</div><div class="dn" style="left:-2.70px;top:230.8px">3</div><div class="dn" style="left:47.17px;top:230.8px">4</div><div class="dn" style="left:97.04px;top:230.8px">5</div><div class="dn" style="left:146.91px;top:230.8px">6</div><div class="dn" style="left:196.78px;top:230.8px">7</div><div class="dn" style="left:246.65px;top:230.8px">8</div><div class="dn" style="left:296.52px;top:230.8px">9</div><div class="dn" style="left:-2.70px;top:314.4px">10</div><div class="dn" style="left:47.17px;top:314.4px">11</div><div class="dn" style="left:97.04px;top:314.4px">12</div><div class="dn" style="left:146.91px;top:314.4px">13</div><div class="dn" style="left:196.78px;top:314.4px">14</div><div class="dn" style="left:246.65px;top:314.4px">15</div><div class="dn" style="left:296.52px;top:314.4px">16</div><div class="dn" style="left:-2.70px;top:398.0px">17</div><div class="dn" style="left:47.17px;top:398.0px">18</div><div class="dn" style="left:97.04px;top:398.0px">19</div><div class="dn" style="left:146.91px;top:398.0px">20</div><div class="dn" style="left:196.78px;top:398.0px">21</div><div class="dn" style="left:246.65px;top:398.0px">22</div><div class="dn" style="left:296.52px;top:398.0px">23</div><div class="dn" style="left:-2.70px;top:482.3px;font-weight:bold;font-size:13.6px;letter-spacing:.3px;text-shadow:none;transform:none;-webkit-text-stroke:0">24</div><div class="dn" style="left:47.17px;top:481.6px">25</div><div class="dn" style="left:97.04px;top:481.6px">26</div><div class="dn" style="left:146.91px;top:481.6px">27</div><div class="dn" style="left:196.78px;top:481.6px">28</div><div class="dn" style="left:246.65px;top:481.6px">29</div><div class="dn" style="left:296.52px;top:481.6px">30</div><div class="dn" style="left:-2.70px;top:566.1px">31</div>
<div class="abs" style="left:8px;top:30px;color:#fff;font-size:15px;line-height:20px;-webkit-text-stroke:0.3px #fff">Back</div>
<div class="tb"><svg class="abs" style="left:0;top:0" width="350" height="41" viewBox="350 582 350 41">
<g fill="#fff">
<path d="M398.6 601.7 L407.4 595.3 V608.1 Z"/><path d="M407 601.7 L415.8 595.3 V608.1 Z"/>
<path d="M457.5 601.85 L471.1 594.7 V609 Z"/>
<path d="M592.5 601.85 L578.9 594.7 V609 Z"/>
<path d="M643.2 601.7 L634.3 595.3 V608.1 Z"/><path d="M651.8 601.7 L643 595.3 V608.1 Z"/>
</g>
<g fill="none" stroke="#fff">
<rect x="515.4" y="595.8" width="19.2" height="14.2" rx="1.6" stroke-width="1.6"/>
<path d="M515 599.7 H535" stroke-width="1.4"/>
<path d="M519.3 593 V597.9 M523.2 593 V597.9 M527.1 593 V597.9 M530.9 593 V597.9" stroke-width="1.2"/>
<path d="M520.7 604.5 L523.9 607.2 L530.4 602" stroke-width="1.7"/>
</g>
</svg></div>
</div>
</body></html>
